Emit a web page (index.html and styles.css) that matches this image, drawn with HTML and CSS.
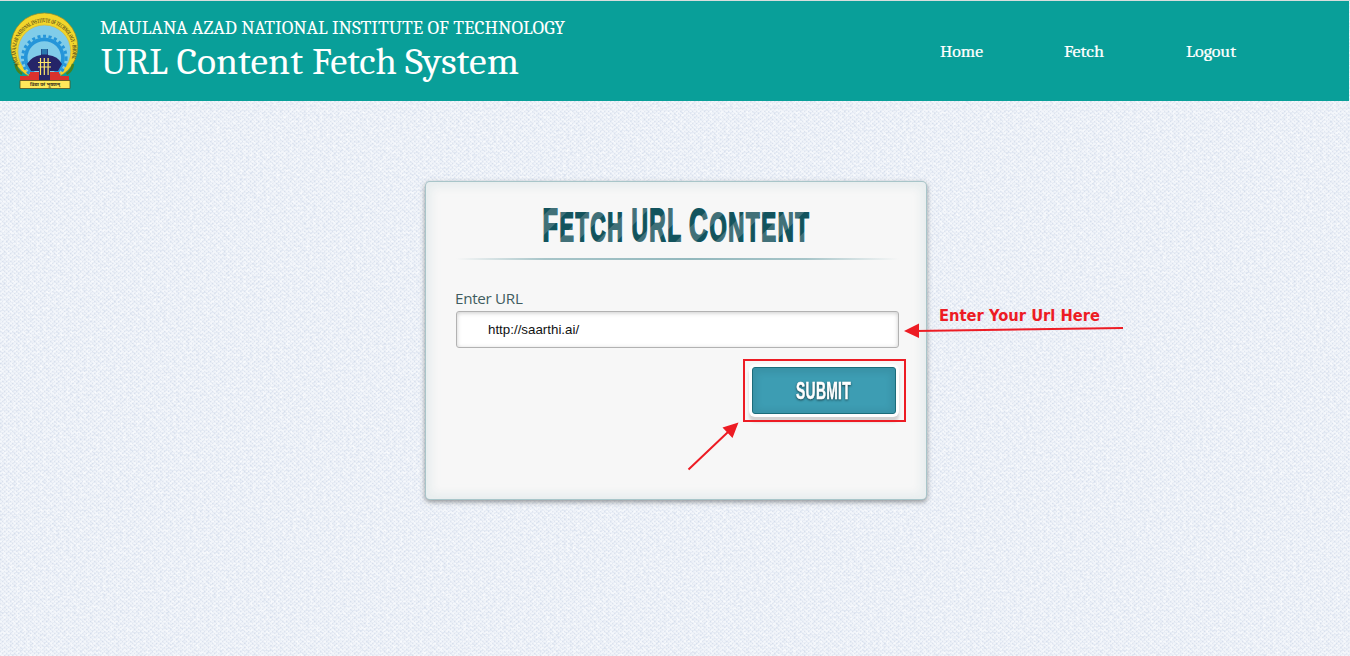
FILE: index.html
```html
<!DOCTYPE html>
<html lang="en">
<head>
<meta charset="utf-8">
<title>URL Content Fetch System</title>
<link rel="stylesheet" href="styles.css">
</head>
<body>
<svg class="linen" width="1350" height="656" aria-hidden="true">
  <defs>
    <filter id="weave" x="0" y="0" width="100%" height="100%" color-interpolation-filters="sRGB">
      <feTurbulence type="fractalNoise" baseFrequency="0.3 0.45" numOctaves="3" seed="8"/>
      <feColorMatrix values="0.15 0 0 0 0.845  0.12 0 0 0 0.878  0.07 0 0 0 0.932  0 0 0 0 1"/>
    </filter>
    <pattern id="threads" width="4" height="4" patternUnits="userSpaceOnUse">
      <path d="M0 0h2v1H0zM2 2h2v1H2z" fill="#fff" opacity=".4"/>
      <path d="M2 0h1v1H2zM0 2h1v1H0z" fill="#b5c1d8" opacity=".25"/>
    </pattern>
  </defs>
  <rect width="1350" height="656" filter="url(#weave)"/>
  <rect width="1350" height="656" fill="url(#threads)"/>
</svg>

<header class="header">
  <svg class="logo" width="70" height="78" viewBox="10 12 70 78">
    <defs>
      <path id="ring" d="M19.500 65A28.500 28.500 0 1 1 69.100 65"/>
      <clipPath id="sky"><rect x="10" y="12" width="70" height="64"/></clipPath>
    </defs>
    <ellipse cx="44.3" cy="46.5" rx="33.4" ry="33.5" fill="#f2d62b" stroke="#9c8b24" stroke-width=".7"/>
    <circle cx="44.3" cy="51.500" r="26.500" fill="#80cce9" stroke="#d9b934" stroke-width=".7" clip-path="url(#sky)"/>
    <g clip-path="url(#sky)">
      <circle cx="44.3" cy="58" r="21.800" fill="none" stroke="#2595d9" stroke-width="3" stroke-dasharray="3 2.600"/>
      <circle cx="44.3" cy="58" r="20.500" fill="#2595d9"/>
      <circle cx="44.3" cy="58" r="16.800" fill="#80cce9"/>
    </g>
    <path d="M27 64q5-8 14-9v-6h7v6q10 1 14 9l-4 7H31z" fill="#252568"/>
    <path d="M41.500 49h6v5.500h-6z" fill="#2878ae"/>
    <path d="M20 76h9v-2h5v2h5v5H20zM50 76h5v-2h5v2h9v5H50z" fill="#d9322e"/>
    <path d="M30 76v-4h29v4l-9 1v4H39v-4z" fill="#d9322e"/>
    <path d="M39 69h11v12H39z" fill="#252568"/>
    <path d="M40.500 58v17M44.300 58v17M48.100 58v17M38 62.500h13M38 67h13" stroke="#ffe96a" stroke-width="1.2"/>
    <path d="M15.500 64q1 7 6.500 10M73 64q-1 7-6.500 10" fill="none" stroke="#47821e" stroke-width="2.500"/>
    <path d="M20 80.500h50v8H20z" fill="#ffe85a" stroke="#51511e" stroke-width=".8"/>
    <text class="ring-text" textLength="112" lengthAdjust="spacingAndGlyphs"><textPath href="#ring">MAULANA AZAD NATIONAL INSTITUTE OF TECHNOLOGY - BHOPAL</textPath></text>
    <text class="motto" x="30" y="86.3" textLength="30" lengthAdjust="spacingAndGlyphs">विद्या परं भूषणम्</text>
  </svg>
  <svg class="titles" width="480" height="80">
    <text class="inst" x="0" y="22" textLength="465" lengthAdjust="spacingAndGlyphs">MAULANA AZAD NATIONAL INSTITUTE OF TECHNOLOGY</text>
    <g class="system">
      <text x="1" y="62" textLength="67" lengthAdjust="spacingAndGlyphs">URL</text>
      <text x="76.500" y="62" textLength="126.500" lengthAdjust="spacingAndGlyphs">Content</text>
      <text x="212" y="62" textLength="85" lengthAdjust="spacingAndGlyphs">Fetch</text>
      <text x="305" y="62" textLength="114" lengthAdjust="spacingAndGlyphs">System</text>
    </g>
  </svg>
  <nav class="nav">
    <svg width="44" height="24"><text x="0" y="17" textLength="43" lengthAdjust="spacingAndGlyphs">Home</text></svg>
    <svg width="42" height="24"><text x="0" y="17" textLength="40" lengthAdjust="spacingAndGlyphs">Fetch</text></svg>
    <svg width="52" height="24"><text x="0" y="17" textLength="50" lengthAdjust="spacingAndGlyphs">Logout</text></svg>
  </nav>
</header>

<main class="card">
  <svg class="heading" width="443" height="61">
    <defs>
      <pattern id="stripes" width="28" height="28" patternUnits="userSpaceOnUse" patternTransform="translate(7 0) rotate(45)">
        <rect width="28" height="28" fill="#417078"/><rect width="14" height="28" fill="#12535d"/>
      </pattern>
    </defs>
    <g class="fetch-title" fill="url(#stripes)" stroke="url(#stripes)" stroke-width="2">
      <text x="86.500" y="43.500" textLength="82" lengthAdjust="spacingAndGlyphs">F<tspan class="small">ETCH</tspan></text>
      <text x="175.500" y="43.500" textLength="51" lengthAdjust="spacingAndGlyphs">URL</text>
      <text x="233" y="43.500" textLength="121.500" lengthAdjust="spacingAndGlyphs">C<tspan class="small">ONTENT</tspan></text>
    </g>
  </svg>
  <div class="rule"></div>
  <form class="form">
    <label class="label" for="url">Enter URL</label>
    <input class="field" id="url" type="text" value="http://saarthi.ai/">
    <button class="submit" type="button">
      <svg width="60" height="32"><text x="2" y="23.500" textLength="55" lengthAdjust="spacingAndGlyphs">SUBMIT</text></svg>
    </button>
  </form>
</main>

<svg class="notes" width="1350" height="656">
  <rect x="744" y="360" width="161" height="61" fill="none" stroke="#ed1c24" stroke-width="2"/>
  <path d="M915 331L1123 328M688.500 469.500L728 432" stroke="#ed1c24" stroke-width="2"/>
  <path d="M904 331L919 323.500V338zM738.500 422.500L722.500 427.500L732.500 438z" fill="#ed1c24"/>
  <text class="note" x="939" y="321" textLength="161" lengthAdjust="spacingAndGlyphs">Enter Your Url Here</text>
</svg>
</body>
</html>
```
FILE: styles.css
```css
* { box-sizing: border-box; }
body { margin: 0; height: 656px; overflow: hidden; background: #e9eef7; font-family: "Open Sans", sans-serif; border-top: 1px solid #d8dddd; }
svg { display: block; flex: none; }
.linen { position: absolute; inset: 0; z-index: -1; top: 1px; }
.header { width: 1349px; height: 100px; background: #099f99; display: flex; align-items: flex-start; padding: 11px 0 0 10px; }
.titles { margin-left: 20px; overflow: visible; }
.inst, .system, .nav text { font-family: Cambria, Caladea, "Noto Serif", "Droid Serif", "DejaVu Serif Condensed", serif; fill: #fff; }
.inst { font-size: 19px; }
.system { font-size: 38.500px; }
.nav { display: flex; margin: 28px 0 0 360px; gap: 80px; }
.nav text { font-size: 16px; stroke: #fff; stroke-width: .2px; }
.ring-text { font: bold 6px "Liberation Serif", serif; fill: #4e421a; }
.motto { font: bold 5px "Noto Sans Devanagari", "Noto Sans", sans-serif; fill: #3c351b; }
.card { width: 502px; height: 319px; margin: 80px 0 0 425px; padding: 15px 30px; background: #f7f7f7; border: 1px solid #93b8bd; border-color: rgba(147,184,189,.8); border-radius: 5px; box-shadow: 0 2px 5px rgba(105,108,109,.7), 0 0 8px 5px rgba(208,223,226,.4) inset; }
.fetch-title { font: bold 47px "Liberation Sans Narrow", "Liberation Sans", sans-serif; letter-spacing: 3px; }
.small { font-size: 40px; }
.rule { width: 443px; height: 2px; background: linear-gradient(to right, rgba(147,184,189,0), rgba(147,184,189,.8) 20%, #93b8bd 53%, rgba(147,184,189,.8) 79%, rgba(147,184,189,0)); }
.form { display: flex; flex-direction: column; width: 443px; padding-top: 28px; }
.label { height: 23px; margin-left: -1px; font-size: 15.200px; letter-spacing: -.3px; line-height: 20px; color: #405c60; }
.field { width: 443px; height: 37px; padding: 0 32px 0 31px; font: 13.330px "Liberation Sans", sans-serif; color: #111; background: #fff; border: 1px solid #b2b2b2; border-radius: 3px; box-shadow: 0 1px 4px rgba(168,168,168,.6) inset; outline: none; }
.submit { align-self: flex-end; width: 144px; height: 47px; margin: 19px 3px 0 0; padding: 0; display: flex; align-items: center; justify-content: center; background: #3d9db3; border: 1px solid #1c6c7a; border-radius: 3px; box-shadow: 0 1px 6px 4px rgba(0,0,0,.07) inset, 0 0 0 3px #fefefe, 0 5px 3px 3px #d2d2d2; }
.submit svg { overflow: visible; filter: drop-shadow(0 1px 1px rgba(0,0,0,.6)); }
.submit text { font: bold 24px "Liberation Sans Narrow", "Liberation Sans", sans-serif; fill: #fff; stroke: #fff; stroke-width: .5px; letter-spacing: .5px; }
.notes { position: absolute; left: 0; top: 0; pointer-events: none; }
.note { font: bold 16px "DejaVu Sans", sans-serif; fill: #ed1c24; }
```
